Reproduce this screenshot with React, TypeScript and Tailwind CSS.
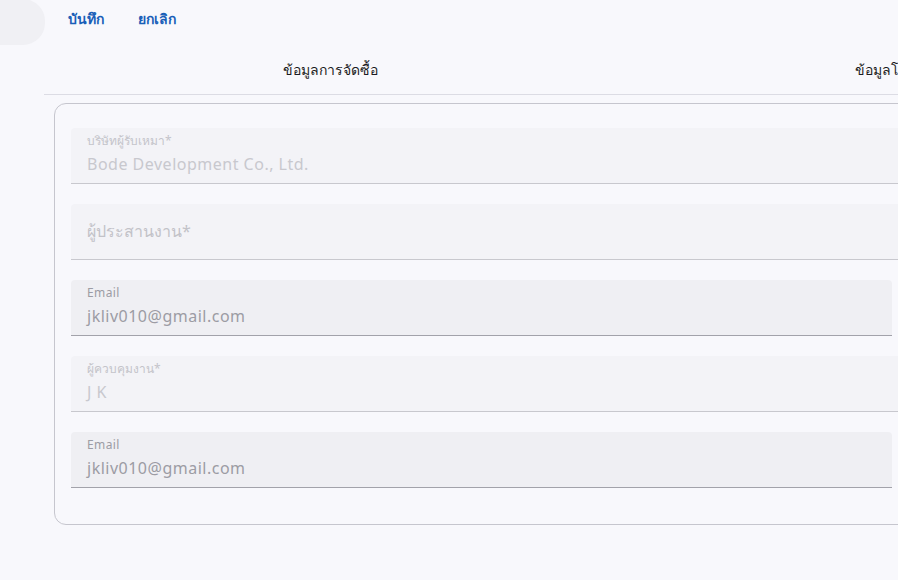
import React from "react";

const font = { fontFamily: '"Noto Sans", "Open Sans", sans-serif' };

function Field({
  label,
  value,
  placeholder,
  enabled,
  wide,
}: {
  label?: string;
  value?: string;
  placeholder?: string;
  enabled?: boolean;
  wide?: boolean;
}) {
  const latinLabel = label === "Email";
  return (
    <div
      className={`relative h-[56px] shrink-0 rounded-t-[4px] border-b ${
        wide ? "w-[1000px]" : "w-[821px]"
      } ${
        enabled
          ? "bg-[#efeff3] border-[#a2a2aa]"
          : "bg-[#f3f3f7] border-[#c8c8ce]"
      }`}
    >
      {placeholder ? (
        <div className="absolute left-4 top-[15px] text-[16px] leading-[24px] text-[#c2c2c8]">
          {placeholder}
        </div>
      ) : (
        <>
          <div
            className={`absolute left-4 top-[5px] text-[12px] leading-[16px] ${
              latinLabel ? "tracking-[0.4px]" : ""
            } ${enabled ? "text-[#9c9ca4]" : "text-[#c4c4ca]"}`}
          >
            {label}
          </div>
          <div
            className={`absolute left-4 top-[24px] text-[16px] leading-[24px] tracking-[0.5px] ${
              enabled ? "text-[#9c9ca4]" : "text-[#c8c8ce]"
            }`}
          >
            {value}
          </div>
        </>
      )}
    </div>
  );
}

export default function App() {
  return (
    <div
      className="relative w-[898px] h-[580px] overflow-hidden bg-[#f8f8fc]"
      style={font}
    >
      <div className="flex h-[46px]">
        <div className="w-[45px] h-[46px] rounded-br-[22px] rounded-tr-[22px] bg-[#f0f0f4] -mt-[1px]" />
        <div className="flex items-start pt-[8px] text-[14px] leading-[22px] font-semibold text-[#1a5fb8]">
          <span className="ml-[23px]">บันทึก</span>
          <span className="ml-[34px]">ยกเลิก</span>
        </div>
      </div>
      <div className="ml-[44px] w-[1200px] flex h-[49px] border-b border-[#dcdce4]">
        <div className="w-[573px] flex items-center justify-center text-[14px] font-medium text-[#1c1c22] pb-[2px]">
          ข้อมูลการจัดซื้อ
        </div>
        <div className="w-[567px] flex items-center justify-center text-[14px] font-medium text-[#1c1c22] pb-[2px]">
          ข้อมูลโครงการ
        </div>
      </div>
      <div className="ml-[54px] mt-[8px] w-[1000px] h-[422px] rounded-[12px] border border-[#c6c6ce] pt-[24px] pl-[16px] flex flex-col gap-[20px]">
        <Field label="บริษัทผู้รับเหมา*" value="Bode Development Co., Ltd." wide />
        <Field placeholder="ผู้ประสานงาน*" wide />
        <Field label="Email" value="jkliv010@gmail.com" enabled />
        <Field label="ผู้ควบคุมงาน*" value="J K" wide />
        <Field label="Email" value="jkliv010@gmail.com" enabled />
      </div>
    </div>
  );
}
